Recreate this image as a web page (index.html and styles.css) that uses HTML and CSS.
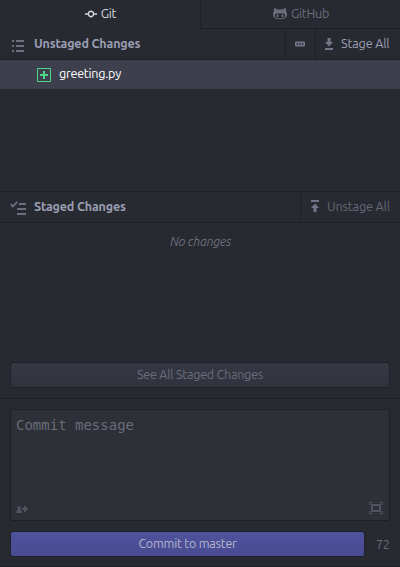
FILE: index.html
```html
<!DOCTYPE html>
<html lang="en">
<head>
<meta charset="utf-8">
<title>Git</title>
<link rel="stylesheet" href="styles.css">
</head>
<body>
<main class="dock">
  <nav class="tabs">
    <div class="tab active">
      <svg width="14" height="16" viewBox="0 0 14 16"><path d="M10.86 7c-.45-1.72-2-3-3.86-3-1.86 0-3.41 1.28-3.86 3H0v2h3.14c.45 1.72 2 3 3.86 3 1.86 0 3.41-1.28 3.86-3H14V7h-3.14zM7 10.2c-1.22 0-2.2-.98-2.2-2.2 0-1.22.98-2.2 2.2-2.2 1.22 0 2.2.98 2.2 2.2 0 1.22-.98 2.2-2.2 2.2z"/></svg>
      <span>Git</span>
    </div>
    <div class="tab hub">
      <svg width="14" height="16" viewBox="0 0 14 16"><path fill-rule="evenodd" d="M12.9 5.3c.3-.8.3-2.1-.1-3-1.2 0-2.500.6-3.400 1.300-1.500-.3-3.300-.3-4.800 0C3.700 2.900 2.400 2.300 1.200 2.300c-.4.9-.4 2.200-.1 3C.4 6 0 6.900 0 8.100 0 12 2.500 13.300 7 13.300s7-1.300 7-5.200c0-1.200-.4-2.100-1.100-2.800zM7 12.400c-3.400 0-5.100-.4-5.100-2.800 0-2.700 2.500-2.100 5.100-2.100s5.100-.6 5.100 2.100c0 2.400-1.700 2.800-5.100 2.800z"/><ellipse cx="4.500" cy="9.800" rx="1" ry="1.500"/><ellipse cx="9.500" cy="9.800" rx="1" ry="1.500"/></svg>
      <span>GitHub</span>
    </div>
  </nav>

  <section class="unstaged">
    <header class="bar">
      <svg class="lead" width="14" height="14" viewBox="0 0 14 14"><path d="M1 2h2v2H1zM5 2h8v2H5zM1 7h2v2H1zM5 7h8v2H5zM1 12h2v2H1zM5 12h8v2H5z"/></svg>
      <h2>Unstaged Changes</h2>
      <button class="cell more"><svg width="10" height="6" viewBox="0 0 10 6"><path fill-rule="evenodd" d="M1 .5h8a1 1 0 0 1 1 1v3a1 1 0 0 1-1 1H1a1 1 0 0 1-1-1v-3a1 1 0 0 1 1-1zM1.500 2.200v1.600h1.700V2.200zM4.200 2.200v1.600h1.600V2.200zM6.800 2.200v1.600h1.700V2.200z"/></svg></button>
      <button class="cell stage"><svg width="8" height="12" viewBox="0 0 8 12"><path d="M2.500 0h3v4H8L4 8.500 0 4h2.500zM0 10h8v2H0z"/></svg><span>Stage All</span></button>
    </header>
    <div class="file">
      <svg width="14" height="14" viewBox="0 0 14 14"><path fill-rule="evenodd" d="M1 0h12a1 1 0 0 1 1 1v12a1 1 0 0 1-1 1H1a1 1 0 0 1-1-1V1a1 1 0 0 1 1-1zM1 1v12h12V1zM6 3h2v3h3v2H8v3H6V8H3V6h3z"/></svg>
      <span>greeting.py</span>
    </div>
  </section>

  <section class="staged">
    <header class="bar">
      <svg class="lead check" width="16" height="14" viewBox="0 0 16 14"><path d="M9 2h7v2H9zM7 7h9v2H7zM7 12h9v2H7z"/><path class="tick" d="M.6 3.200l2.300 2.200L7.300.9"/></svg>
      <h2>Staged Changes</h2>
      <button class="cell unstage"><svg width="8" height="12" viewBox="0 0 8 12"><path d="M0 0h8v2H0zM2.500 12h3V8H8L4 3.500 0 8h2.500z"/></svg><span>Unstage All</span></button>
    </header>
    <p class="empty">No changes</p>
    <button class="see">See All Staged Changes</button>
  </section>

  <section class="commit">
    <div class="editor">
      <div class="placeholder">Commit message</div>
      <div class="tools">
        <svg class="people" width="12" height="7" viewBox="0 0 12 7"><path d="M3.100 0c1.200 0 1.700.8 1.600 1.900C4.600 3 4.200 3.300 4.200 4c.5.500 2 .5 2 3H0c0-2.500 1.500-2.500 2-3 0-.7-.4-1-.5-2.100C1.400.8 1.900 0 3.100 0zM8 0h2v2h2v2h-2v2H8V4H6V2h2z"/></svg>
        <svg class="expand" width="14" height="12" viewBox="0 0 14 12"><path fill-rule="evenodd" d="M0 0h4v1H1v2H0zM10 0h4v3h-1V1h-3zM0 9h1v2h3v1H0zM13 9h1v3h-4v-1h3zM2 2h10v8H2zM4 4v4h6V4z"/></svg>
      </div>
    </div>
    <div class="actions">
      <button class="primary">Commit to master</button>
      <span class="count">72</span>
    </div>
  </section>
</main>
</body>
</html>
```
FILE: styles.css
```css
* { box-sizing: border-box; }
body {
  margin: 0;
  background: #272a31;
  color: #9b9eb3;
  font: 12.6px/16px "Ubuntu", "Noto Sans", sans-serif;
  letter-spacing: -0.26px;
}
svg { display: block; flex: none; fill: currentColor; }
button {
  margin: 0;
  padding: 0;
  border: 0;
  background: none;
  color: inherit;
  font: inherit;
  letter-spacing: inherit;
}
span, h2 { white-space: nowrap; }
.dock {
  display: flex;
  flex-direction: column;
  height: 567px;
  overflow: hidden;
  border-bottom: 1px solid #1d2025;
}
.tabs { display: flex; height: 29px; }
.tab {
  flex: 1;
  display: flex;
  align-items: center;
  justify-content: center;
  gap: 4px;
  border-left: 1px solid #1d2025;
  border-bottom: 1px solid #1d2025;
  color: #6b6d7c;
}
.tab.active { border-color: transparent; color: #d5d6df; }
.tab.active svg { width: 12px; }
.tab span { padding-bottom: 2px; }
.hub span { margin-right: -1px; }
.unstaged { height: 162px; }
.bar {
  display: flex;
  align-items: center;
  height: 31px;
  border-bottom: 1px solid #1d2025;
}
.lead { margin: 1px 9px 0 11px; color: #6d6f7e; }
.check { margin: 1px 8px 0 10px; }
.tick { fill: none; stroke: currentColor; stroke-width: 1.8; }
h2 {
  flex: 1;
  margin: 0;
  padding-bottom: 2px;
  font-size: 12.5px;
  line-height: 16px;
  font-weight: 700;
  letter-spacing: -0.16px;
}
.cell {
  display: flex;
  align-items: center;
  height: 30px;
  border-left: 1px solid #1d2025;
}
.cell svg { color: #73758a; }
.cell span { padding-bottom: 2px; }
.more { width: 30px; padding-left: 9px; }
.stage { width: 85px; padding-left: 9px; gap: 8px; letter-spacing: -0.15px; }
.unstage { width: 100px; padding-left: 10px; gap: 8px; color: #666877; letter-spacing: -0.15px; }
.unstage svg { margin-bottom: 2px; color: #73758a; }
.file {
  display: flex;
  align-items: center;
  height: 29px;
  padding: 0 0 1px 37px;
  gap: 8px;
  background: #3d3f4c;
  color: #fff;
}
.file svg { margin-top: 1px; color: #4bd68a; }
.file span { padding-bottom: 2px; }
.staged {
  height: 208px;
  display: flex;
  flex-direction: column;
  border-top: 1px solid #1d2025;
  border-bottom: 1px solid #1d2025;
}
.empty { margin: 10px 0 0 1px; text-align: center; font-style: italic; color: #6b6d7a; }
.see {
  height: 26px;
  margin: auto 10px 10px;
  padding-bottom: 2px;
  border: 1px solid #1f2127;
  border-radius: 3px;
  background: linear-gradient(#353743, #31333e);
  color: #6b6d7b;
}
.commit { padding: 10px 10px 0; }
.editor {
  display: flex;
  flex-direction: column;
  justify-content: space-between;
  height: 112px;
  padding: 6px 6px 6px 5px;
  border: 1px solid #1d2025;
  border-radius: 3px;
  background: #2d3036;
}
.placeholder { color: #696c7a; font: 14px/18px "DejaVu Sans Mono", monospace; letter-spacing: 0; }
.tools { display: flex; justify-content: space-between; align-items: flex-end; color: #51535f; }
.people { margin-bottom: 1px; }
.actions { display: flex; align-items: center; margin-top: 10px; }
.primary {
  flex: none;
  width: 355px;
  height: 26px;
  padding-bottom: 2px;
  border: 1px solid #1f2127;
  border-radius: 3px;
  background: linear-gradient(#4f539c, #494b92);
  color: #b2b4cb;
}
.count { margin-left: 11px; color: #6b6d7a; }
```
